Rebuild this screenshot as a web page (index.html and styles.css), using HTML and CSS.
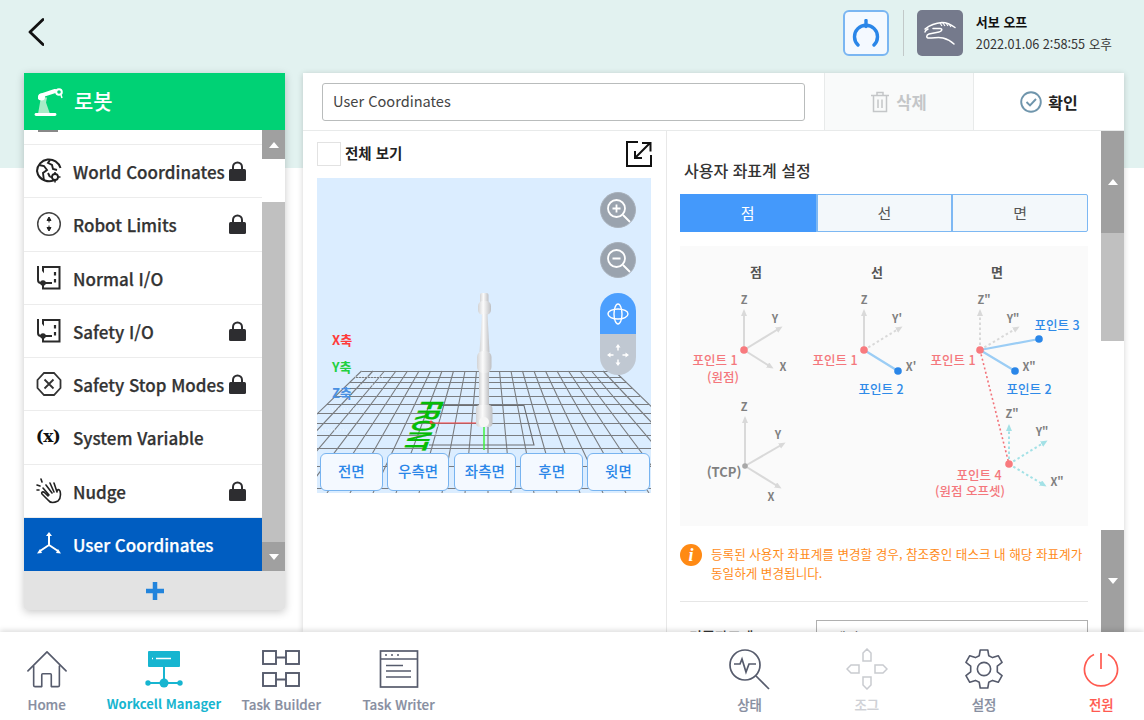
FILE: index.html
```html
<!DOCTYPE html>
<html lang="ko">
<head>
<meta charset="utf-8">
<title>User Coordinates</title>
<link rel="stylesheet" href="styles.css">
</head>
<body>
<div class="app">
  <header class="top">
    <button class="back"><svg width="16" height="28" viewBox="0 0 16 28"><path d="M15 1.500 2 14l13 12.500" fill="none" stroke="#111" stroke-width="2.800" stroke-linecap="round" stroke-linejoin="round"/></svg></button>
    <div class="top-right">
      <div class="home-btn"><svg width="28" height="28" viewBox="0 0 28 28"><path d="M6 26A11.500 11.500 0 1 1 22 26" fill="none" stroke="#2a86e8" stroke-width="3.400" stroke-linecap="round"/><path d="M14 1.500v6" stroke="#2a86e8" stroke-width="3.400" stroke-linecap="round"/></svg></div>
      <div class="vline"></div>
      <div class="servo"><svg width="34" height="26" viewBox="0 0 34 26"><path d="M2 9C7 5 12 3 19 2.500c5 0 9 2 13 5M10 8.500h7c3 0 2 3-1 3.500l-10 2c-3 1-3 4 0 4 6 0 10-1 14 0 4 1 8 3 11 6M2 12c0-1 1-2 3-3" fill="none" stroke="#fff" stroke-width="1.500" stroke-linecap="round"/><path d="M17 3l2 3M20 3l2 3M23 3l2 3M26 4l2 3" stroke="#fff" stroke-width="1.100"/></svg></div>
      <div class="servo-text"><div class="servo-title">서보 오프</div><div class="servo-date">2022.01.06 2:58:55 오후</div></div>
    </div>
  </header>

  <main class="main">
    <aside class="side">
      <div class="side-head">
        <svg width="30" height="30" viewBox="0 0 30 30"><path d="M4 27l3-17 6 .5-1 5 4 11.500z" fill="#a8ecc8"/><path d="M2 27.500h19" stroke="#fff" stroke-width="2.800" stroke-linecap="round"/><path d="M6 11 7 8.500 21 4" stroke="#fff" stroke-width="4" stroke-linecap="round"/><circle cx="7.500" cy="10" r="3.500" fill="#fff"/><circle cx="25" cy="5" r="2.800" fill="none" stroke="#fff" stroke-width="2"/><path d="M27 8l1 3" stroke="#fff" stroke-width="1.500"/></svg>
        <span>로봇</span>
      </div>
      <div class="side-body">
        <ul class="list">
          <li class="item item-cut"><i class="cut-bar"></i></li>
          <li class="item">
            <svg class="ic" viewBox="0 0 26 26"><path d="M21 20A12 12 0 0 1 1 13 12 12 0 0 1 24.500 10" fill="none" stroke="#222" stroke-width="2"/><path d="M3 7l5 1 3 4-4 3 1 8M14 2l-2 3 4 2 1 4 4 1M12 15l2 4" fill="none" stroke="#222" stroke-width="1.900"/><circle cx="19" cy="19" r="3" fill="#fff" stroke="#222" stroke-width="1.800"/><path d="M19 14v2M19 22v2.500M14 19h2M22 19h2.500" stroke="#222" stroke-width="1.600"/></svg>
            <span class="lbl">World Coordinates</span>
            <svg class="lock" viewBox="0 0 17 20"><path d="M4 9V6a4.500 4.500 0 0 1 9 0v3" fill="none" stroke="#2d2d30" stroke-width="2"/><rect y="8" width="17" height="12" rx="1.500" fill="#2d2d30"/></svg>
          </li>
          <li class="item">
            <svg class="ic" viewBox="0 0 26 26"><circle cx="13" cy="13" r="11.300" fill="none" stroke="#444" stroke-width="1.500"/><path d="M13 6l2 3.500h-4zM13 9.500v2M13 20l2-3.500h-4zM13 16.500v-2" fill="#222" stroke="#222" stroke-width="1"/></svg>
            <span class="lbl">Robot Limits</span>
            <svg class="lock" viewBox="0 0 17 20"><path d="M4 9V6a4.500 4.500 0 0 1 9 0v3" fill="none" stroke="#2d2d30" stroke-width="2"/><rect y="8" width="17" height="12" rx="1.500" fill="#2d2d30"/></svg>
          </li>
          <li class="item">
            <svg class="ic" viewBox="0 0 26 26"><rect x="7" y="2" width="16.500" height="21.500" fill="none" stroke="#2a2a2a" stroke-width="2"/><path d="M2 1v14c0 2 1 3 3 3h11" fill="#fff" stroke="#2a2a2a" stroke-width="2"/><circle cx="7" cy="18" r="2.800" fill="#2a2a2a"/><path d="M19 7v3.500M19 14v3.500" stroke="#2a2a2a" stroke-width="2.200"/></svg>
            <span class="lbl">Normal I/O</span>
          </li>
          <li class="item">
            <svg class="ic" viewBox="0 0 26 26"><rect x="7" y="2" width="16.500" height="21.500" fill="none" stroke="#2a2a2a" stroke-width="2"/><path d="M2 1v14c0 2 1 3 3 3h11" fill="#fff" stroke="#2a2a2a" stroke-width="2"/><circle cx="7" cy="18" r="2.800" fill="#2a2a2a"/><path d="M19 7v3.500M19 14v3.500" stroke="#2a2a2a" stroke-width="2.200"/></svg>
            <span class="lbl">Safety I/O</span>
            <svg class="lock" viewBox="0 0 17 20"><path d="M4 9V6a4.500 4.500 0 0 1 9 0v3" fill="none" stroke="#2d2d30" stroke-width="2"/><rect y="8" width="17" height="12" rx="1.500" fill="#2d2d30"/></svg>
          </li>
          <li class="item">
            <svg class="ic" viewBox="0 0 26 26"><path d="M8 2h10l6.500 7v8L18 24H8l-6.500-7V9z" fill="none" stroke="#333" stroke-width="1.800"/><path d="M8.500 8.500l9 9M17.500 8.500l-9 9" stroke="#333" stroke-width="1.800"/></svg>
            <span class="lbl">Safety Stop Modes</span>
            <svg class="lock" viewBox="0 0 17 20"><path d="M4 9V6a4.500 4.500 0 0 1 9 0v3" fill="none" stroke="#2d2d30" stroke-width="2"/><rect y="8" width="17" height="12" rx="1.500" fill="#2d2d30"/></svg>
          </li>
          <li class="item">
            <span class="ic ic-x">(x)</span>
            <span class="lbl">System Variable</span>
          </li>
          <li class="item">
            <svg class="ic" viewBox="0 0 26 26"><path d="M7 10l6 7M10 7l6 8M14 5l4 9M18 5l3 9c0-3 2-3 3-1 1 4 0 8-2 10-4 2-8 2-10-1L6 16c-1-2 1-3 3-1l3 3" fill="none" stroke="#222" stroke-width="1.600" stroke-linecap="round" stroke-linejoin="round"/><path d="M1 7l3 1M5 1l1 3M1 12h2" stroke="#222" stroke-width="1.600" stroke-linecap="round"/></svg>
            <span class="lbl">Nudge</span>
            <svg class="lock" viewBox="0 0 17 20"><path d="M4 9V6a4.500 4.500 0 0 1 9 0v3" fill="none" stroke="#2d2d30" stroke-width="2"/><rect y="8" width="17" height="12" rx="1.500" fill="#2d2d30"/></svg>
          </li>
          <li class="item item-on">
            <svg class="ic" viewBox="0 0 26 26"><path d="M13 14V4M13 14l-9 6M13 14l9 6" stroke="#fff" stroke-width="2"/><path d="M13 1l3 4h-6zM1 22.500l5-.5-2-4zM25 22.500l-5-.5 2-4z" fill="#fff"/></svg>
            <span class="lbl">User Coordinates</span>
          </li>
        </ul>
        <div class="sb sb-left">
          <div class="sb-btn sb-btn-s"><i class="tri-up"></i></div>
          <div class="sb-gap-top"></div>
          <div class="sb-thumb"></div>
          <div class="sb-btn sb-btn-s"><i class="tri-down"></i></div>
        </div>
      </div>
      <div class="side-add"><svg width="20" height="20" viewBox="0 0 20 20"><path d="M10 1v18M1 10h18" stroke="#2284dc" stroke-width="4.500"/></svg></div>
    </aside>

    <section class="panel">
      <div class="panel-head">
        <div class="name-wrap"><div class="name-input">User Coordinates</div></div>
        <div class="act act-del">
          <svg width="18" height="22" viewBox="0 0 18 22"><path d="M0 4.500h18M6 4V1.500h6V4M2.500 5v15.500h13V5M7 8.500v8.500M11 8.500v8.500" fill="none" stroke="#c4c6c8" stroke-width="1.500"/></svg>
          <span>삭제</span>
        </div>
        <div class="act act-ok">
          <svg width="22" height="22" viewBox="0 0 22 22"><circle cx="11" cy="11" r="9.800" fill="none" stroke="#6f95ac" stroke-width="1.900"/><path d="M6.500 11l3.500 3.500 6-6.500" fill="none" stroke="#6f95ac" stroke-width="1.900"/></svg>
          <span>확인</span>
        </div>
      </div>
      <div class="panel-body">
        <div class="viewer">
          <div class="viewer-bar">
            <div class="check"></div>
            <span class="check-label">전체 보기</span>
            <svg class="expand" width="26" height="26" viewBox="0 0 26 26"><path d="M12 1H1v24h24V14" fill="none" stroke="#111" stroke-width="2"/><path d="M9 17 24 2M16 2h8.500v8.500M9 10v7h7" fill="none" stroke="#111" stroke-width="2"/></svg>
          </div>
          <div class="canvas">
            <svg class="scene" width="334" height="315" viewBox="0 0 334 315">
              <g stroke="#7a7d81" stroke-width="1.100" fill="none">
                <path d="M44.500 193-82 315M56 193-59 315M67.500 193-36 315M79 193-13 315M90.500 193 10 315M102 193 33 315M113.500 193 56 315M125 193 79 315M136.500 193 102 315M148 193 125 315M159.500 193 148 315M171 193V315M182.500 193 194 315M194 193 217 315M205.500 193 240 315M217 193 263 315M228.500 193 286 315M240 193 309 315M251.500 193 332 315M263 193 355 315M274.500 193 378 315M286 193 401 315M297.500 193 424 315"/>
                <path d="M44.500 193.500H297.500M38 199.500H304M33 204.500H309M27 210.500H315M19 218.500H323M10 226.500H332M1 235.500H334M0 245.500H334M0 257.500H334M0 270.500H334M0 288.500H334M0 310.500H334"/>
                <path d="M122 227.500H207L217 267H112" stroke="#6c6e72"/>
              </g>
              <g stroke="#f4f8fb" stroke-width="1" stroke-dasharray="1 2" fill="none">
                <path d="M38 199H68M34 207H66M12 231H50M2 252H30M110 240H126M108 248H124M106 256H120"/>
              </g>
              <text class="front" transform="matrix(-.27 .72 -1.600 0 105 223)" x="0" y="0">FRONT</text>
              <path d="M114 245H160" stroke="#ff3c3c" stroke-width="1.200"/>
              <circle cx="114" cy="244" r="1.500" fill="#ff3c3c"/>
              <path d="M167 248V272" stroke="#3ff03f" stroke-width="1.500"/>
              <defs>
                <linearGradient id="metal" x1="0" x2="1" y1="0" y2="0"><stop offset="0" stop-color="#d2d3d5"/><stop offset=".4" stop-color="#fbfbfb"/><stop offset="1" stop-color="#bfc0c3"/></linearGradient>
              </defs>
              <g fill="url(#metal)">
                <rect x="163" y="115" width="8.500" height="12" rx="2"/>
                <rect x="161" y="123" width="13" height="14" rx="5"/>
                <path d="M165 136h5.500l2 38h-10z"/>
                <rect x="162" y="185" width="10" height="46"/>
                <rect x="160" y="173" width="14.500" height="22" rx="6"/>
                <rect x="159" y="227" width="16.500" height="22" rx="4"/>
                <circle cx="167" cy="244" r="5" fill="#f6f6f6"/>
              </g>
            </svg>
            <span class="axis axis-x">X축</span>
            <span class="axis axis-y">Y축</span>
            <span class="axis axis-z">Z축</span>
            <div class="tools">
              <div class="tool"><svg width="26" height="26" viewBox="0 0 26 26"><circle cx="11.500" cy="11.500" r="8.500" fill="none" stroke="#fff" stroke-width="1.800"/><path d="M18 18l7 7M7.500 11.500h8M11.500 7.500v8" stroke="#fff" stroke-width="1.800"/></svg></div>
              <div class="tool"><svg width="26" height="26" viewBox="0 0 26 26"><circle cx="11.500" cy="11.500" r="8.500" fill="none" stroke="#fff" stroke-width="1.800"/><path d="M18 18l7 7M7.500 11.500h8" stroke="#fff" stroke-width="1.800"/></svg></div>
              <div class="pill">
                <div class="pill-a"><svg width="24" height="24" viewBox="0 0 24 24"><ellipse cx="12" cy="12" rx="10" ry="5" fill="none" stroke="#fff" stroke-width="1.400"/><ellipse cx="12" cy="12" rx="4" ry="10" fill="none" stroke="#fff" stroke-width="1.400"/></svg></div>
                <div class="pill-b"><svg width="24" height="24" viewBox="0 0 24 24"><path d="M12 3.500v4M12 16.500v4M3.500 12h4M16.500 12h4" stroke="#fff" stroke-width="1.500"/><path d="M12 1l2.500 3.500h-5zM12 23l2.500-3.500h-5zM1 12l3.500-2.500v5zM23 12l-3.500-2.500v5z" fill="#fff"/></svg></div>
              </div>
            </div>
            <div class="views">
              <div class="view">전면</div>
              <div class="view">우측면</div>
              <div class="view">좌측면</div>
              <div class="view">후면</div>
              <div class="view">윗면</div>
            </div>
          </div>
        </div>
        <div class="settings">
          <div class="scroll">
            <h2 class="title">사용자 좌표계 설정</h2>
            <div class="tabs">
              <div class="tab tab-on">점</div>
              <div class="tab">선</div>
              <div class="tab">면</div>
            </div>
            <div class="figure">
              <svg width="408" height="280" viewBox="0 0 408 280">
                <defs>
                  <marker id="ag" markerWidth="8" markerHeight="8" refX="4" refY="3" orient="auto" markerUnits="userSpaceOnUse"><path d="M0 0 7 3 0 6z" fill="#d9d9d9"/></marker>
                  <marker id="at" markerWidth="8" markerHeight="8" refX="4" refY="3" orient="auto" markerUnits="userSpaceOnUse"><path d="M0 0 7 3 0 6z" fill="#a3e1e6"/></marker>
                </defs>
                <g class="heads"><text x="76" y="31">점</text><text x="197" y="31">선</text><text x="317" y="31">면</text></g>
                <g stroke="#d9d9d9" stroke-width="2" fill="none">
                  <path d="M64 104V66" marker-end="url(#ag)"/><path d="M64 104 100 82" marker-end="url(#ag)"/><path d="M64 104 91 121" marker-end="url(#ag)"/>
                  <path d="M184 104V66" marker-end="url(#ag)"/>
                  <path d="M65 220V173" marker-end="url(#ag)"/><path d="M65 220 103 198" marker-end="url(#ag)"/><path d="M65 220 99 241" marker-end="url(#ag)"/>
                </g>
                <g stroke="#d9d9d9" stroke-width="2" stroke-dasharray="2.500 2.500" fill="none">
                  <path d="M184 104 220 82" marker-end="url(#ag)"/><path d="M300 104V66" marker-end="url(#ag)"/><path d="M300 104 337 82" marker-end="url(#ag)"/>
                </g>
                <g stroke="#a3e1e6" stroke-width="2" stroke-dasharray="2.500 2.500" fill="none">
                  <path d="M329 218V181" marker-end="url(#at)"/><path d="M329 218 365 196" marker-end="url(#at)"/><path d="M329 218 364 239" marker-end="url(#at)"/>
                </g>
                <path d="M184 104 218 125M300 104 359 93M300 104 335 125" stroke="#9bcdf5" stroke-width="2.200" fill="none"/>
                <path d="M300 104 329 218" stroke="#f2737a" stroke-width="1.600" stroke-dasharray="2 2.500" fill="none"/>
                <g fill="#f87a7e"><circle cx="64" cy="104" r="3.800"/><circle cx="184" cy="104" r="3.800"/><circle cx="300" cy="104" r="3.800"/><circle cx="329" cy="218" r="3.800"/></g>
                <g fill="#2a86e8"><circle cx="218" cy="125" r="3.800"/><circle cx="359" cy="93" r="3.800"/><circle cx="335" cy="125" r="3.800"/></g>
                <circle cx="65" cy="220" r="2.800" fill="#a8a8a8"/>
                <g class="ax">
                  <text x="64" y="58">Z</text><text x="95" y="77">Y</text><text x="103" y="125">X</text>
                  <text x="184" y="58">Z</text><text x="217" y="77">Y'</text><text x="231" y="125">X'</text>
                  <text x="304" y="58">Z"</text><text x="333" y="77">Y"</text><text x="349" y="125">X"</text>
                  <text x="332" y="172">Z"</text><text x="362" y="190">Y"</text><text x="377" y="240">X"</text>
                  <text x="64" y="165">Z</text><text x="98" y="193">Y</text><text x="91" y="255">X</text>
                  <text x="44" y="231" class="ax-lg">(TCP)</text>
                </g>
                <g class="red">
                  <text x="35" y="119">포인트 1</text><text x="43" y="136">(원점)</text>
                  <text x="155" y="119">포인트 1</text><text x="273" y="119">포인트 1</text>
                  <text x="299" y="234">포인트 4</text><text x="290" y="250">(원점 오프셋)</text>
                </g>
                <g class="blue">
                  <text x="201" y="148">포인트 2</text><text x="349" y="148">포인트 2</text><text x="377" y="84">포인트 3</text>
                </g>
              </svg>
            </div>
            <div class="notice">
              <div class="notice-i">i</div>
              <p class="notice-t">등록된 사용자 좌표계를 변경할 경우, 참조중인 태스크 내 해당 좌표계가<br>동일하게 변경됩니다.</p>
            </div>
            <div class="rule"></div>
            <div class="field">
              <span class="field-label">기준좌표계</span>
              <div class="field-input">베이스</div>
            </div>
          </div>
          <div class="sb sb-right">
            <div class="sb-btn sb-btn-l"><i class="tri-up"></i></div>
            <div class="sb-thumb-r"></div>
            <div class="sb-gap"></div>
            <div class="sb-btn sb-btn-l sb-btn-end"><i class="tri-down"></i></div>
          </div>
        </div>
      </div>
    </section>
  </main>

  <nav class="nav">
    <div class="nav-group">
      <div class="nav-item">
        <svg width="40" height="40" viewBox="0 0 42 40"><path d="M1 22 21 2l20 20M7 17v20c0 1 .5 1.500 1.500 1.500h7V26c0-.500.500-1 1-1h8c.500 0 1 .5 1 1v12.500h7c1 0 1.500-.5 1.500-1.500V17" fill="none" stroke="#565b6c" stroke-width="1.700" stroke-linejoin="round" stroke-linecap="round"/></svg>
        <span>Home</span>
      </div>
      <div class="nav-item nav-on">
        <svg width="38" height="40" viewBox="0 0 38 40"><rect x="3" y="2" width="32" height="16" rx="1" fill="#17b5d0"/><path d="M11 9.500h15M7 9.500h1" stroke="#fff" stroke-width="1.500"/><path d="M19 18v20M2 34h34" stroke="#17b5d0" stroke-width="2"/><circle cx="19" cy="34" r="4.500" fill="#17b5d0"/><circle cx="3" cy="34" r="2.700" fill="#17b5d0"/><circle cx="35" cy="34" r="2.700" fill="#17b5d0"/></svg>
        <span>Workcell Manager</span>
      </div>
      <div class="nav-item">
        <svg width="38" height="40" viewBox="0 0 38 40"><g fill="none" stroke="#565b6c" stroke-width="1.900"><rect x="1" y="2" width="13" height="13"/><rect x="24" y="2" width="13" height="13"/><rect x="1" y="24" width="13" height="13"/><rect x="24" y="24" width="13" height="13"/><path d="M14 8.500h10M14 30.500h10"/></g></svg>
        <span>Task Builder</span>
      </div>
      <div class="nav-item">
        <svg width="40" height="40" viewBox="0 0 40 40"><g fill="none" stroke="#565b6c" stroke-width="1.700"><rect x="1.500" y="2" width="37" height="36"/><path d="M1.500 10h37M7 16.500h17M7 22h25M7 28h25"/></g><path d="M6 6h2M12 6h2M18 6h2" stroke="#565b6c" stroke-width="1.500"/></svg>
        <span>Task Writer</span>
      </div>
    </div>
    <div class="nav-group">
      <div class="nav-item">
        <svg width="42" height="42" viewBox="0 0 42 42"><circle cx="17" cy="17" r="15" fill="none" stroke="#565b6c" stroke-width="1.700"/><path d="M6 16h6l2-5 4 13 3-8h7" fill="none" stroke="#565b6c" stroke-width="1.700"/><path d="M28 28l13 13" stroke="#565b6c" stroke-width="1.700"/></svg>
        <span>상태</span>
      </div>
      <div class="nav-item nav-off">
        <svg width="42" height="42" viewBox="0 0 42 42"><path d="M17 13V5l4-4 4 4v8zM17 29v8l4 4 4-4v-8zM13 17H5l-4 4 4 4h8zM29 17h8l4 4-4 4h-8z" fill="none" stroke="#c9cbd0" stroke-width="1.500"/></svg>
        <span>조그</span>
      </div>
      <div class="nav-item">
        <svg width="38" height="40" viewBox="0 0 40 42"><path d="M16 1h8l1 6 4 2 6-2 4 7-5 4v6l5 4-4 7-6-2-4 2-1 6h-8l-1-6-4-2-6 2-4-7 5-4v-6L1 14l4-7 6 2 4-2z" fill="none" stroke="#565b6c" stroke-width="1.700" stroke-linejoin="round"/><circle cx="20" cy="21" r="7" fill="none" stroke="#565b6c" stroke-width="1.700"/></svg>
        <span>설정</span>
      </div>
      <div class="nav-item nav-power">
        <svg width="36" height="36" viewBox="0 0 36 36"><path d="M11 3.500a16.500 16.500 0 1 0 14 0" fill="none" stroke="#ff5a50" stroke-width="1.700"/><path d="M18 2v16" stroke="#ff5a50" stroke-width="1.700"/></svg>
        <span>전원</span>
      </div>
    </div>
  </nav>
</div>
</body>
</html>
```
FILE: styles.css
```css
* { box-sizing: border-box; }
html, body { margin: 0; padding: 0; }
body {
  width: 1144px;
  height: 720px;
  overflow: hidden;
  font-family: "Noto Sans CJK KR", "Noto Sans", sans-serif;
  background: linear-gradient(#e2f2f0 168px, #fff 168px);
  color: #333;
}
.app { display: flex; flex-direction: column; height: 720px; overflow: hidden; }

/* top */
.top { height: 73px; display: flex; justify-content: space-between; flex: none; }
.back { background: none; border: 0; padding: 0; margin: 18px 0 0 26px; width: 20px; height: 28px; }
.top-right { display: flex; align-items: flex-start; padding-top: 10px; padding-right: 32px; }
.home-btn {
  width: 46px; height: 46px; border: 2px solid #7ab6f2; border-radius: 6px; background: #f4f9ff;
  display: flex; align-items: center; justify-content: center;
}
.vline { width: 1px; height: 46px; background: #c2c9c9; margin: 0 13px 0 14px; }
.servo {
  width: 46px; height: 46px; background: #757a8c; border-radius: 5px;
  display: flex; align-items: center; justify-content: center;
}
.servo-text { margin-left: 13px; }
.servo-title { font-size: 13px; font-weight: 700; line-height: 24px; color: #111; }
.servo-date { font-size: 12.700px; line-height: 19px; color: #333; }

/* main */
.main { flex: none; height: 559px; display: flex; padding-left: 24px; }
.side {
  width: 261px; height: 537px; flex: none; display: flex; flex-direction: column;
  box-shadow: 0 2px 8px rgba(0,0,0,.22); border-radius: 0 0 3px 3px; background: #fff;
}
.side-head {
  height: 57px; flex: none; background: #00d275; display: flex; align-items: center;
  padding-left: 10px; color: #fff; font-size: 21px; font-weight: 500;
}
.side-head span { margin-left: 10px; padding-bottom: 3px; }
.side-body { height: 441px; flex: none; display: flex; }
.list { list-style: none; margin: 0; padding: 0; flex: 1; min-width: 0; }
.item {
  height: 53.250px; display: flex; align-items: center; padding-left: 12px;
  border-bottom: 1px solid #ececec; background: #fff;
}
.item-cut { height: 15px; align-items: flex-start; }
.cut-bar { display: block; width: 20px; height: 2px; background: #888; margin-left: 2px; }
.item-on { background: #005dc1; border-bottom: 0; color: #fff; }
.ic { width: 26px; height: 26px; flex: none; }
.ic-x { font-size: 17px; font-weight: 700; line-height: 24px; text-align: center; color: #111; font-family: "DejaVu Serif", serif; letter-spacing: -.5px; margin-left: -1px; margin-right: 1px; }
.lbl { margin-left: 11px; flex: 1; font-size: 17px; font-weight: 500; line-height: 26px; padding-top: 2px; white-space: nowrap; -webkit-text-stroke: .25px currentColor; }
.lock { width: 17px; height: 20px; flex: none; margin-right: 16px; }

.sb { flex: none; width: 23px; display: flex; flex-direction: column; }
.sb-btn { background: #a0a0a0; display: flex; align-items: center; justify-content: center; flex: none; }
.sb-btn-s { height: 29px; }
.sb-gap-top { height: 43px; background: #fff; flex: none; }
.sb-thumb { flex: 1; background: #c0c0c0; }
.tri-up, .tri-down { display: block; width: 0; height: 0; border-left: 5px solid transparent; border-right: 5px solid transparent; }
.tri-up { border-bottom: 6px solid #fff; }
.tri-down { border-top: 6px solid #fff; }
.side-add {
  height: 39px; flex: none; background: #e3e3e3; display: flex; align-items: center; justify-content: center;
  border-radius: 0 0 3px 3px;
}

/* panel */
.panel {
  width: 821px; height: 559px; flex: none; margin-left: 18px; background: #fff;
  display: flex; flex-direction: column; box-shadow: 0 1px 6px rgba(0,0,0,.18);
}
.panel-head { height: 58px; flex: none; display: flex; border-bottom: 1px solid #e8eaea; }
.name-wrap { width: 521px; padding: 10px 19px 0 19px; flex: none; }
.name-input {
  height: 38px; border: 1px solid #b9bcbc; border-radius: 3px; padding-left: 10px;
  font-size: 14.600px; line-height: 33px; color: #444;
}
.act { display: flex; align-items: center; justify-content: center; gap: 6px; font-size: 16px; font-weight: 700; }
.act-del { width: 150px; background: #f9fafa; border-left: 1px solid #e8eaea; border-right: 1px solid #e8eaea; color: #c4c6c8; gap: 7px; font-size: 16.500px; }
.act-ok { width: 150px; color: #222; }
.panel-body { flex: 1; min-height: 0; display: flex; }

.viewer { width: 364px; flex: none; border-right: 1px solid #e8e8e8; padding: 10px 0 0 14px; }
.viewer-bar { display: flex; align-items: center; width: 335px; height: 26px; }
.check { width: 24px; height: 24px; border: 1px solid #e2e2e2; background: #fff; flex: none; }
.check-label { margin-left: 4px; font-size: 14.500px; font-weight: 700; line-height: 20px; color: #222; flex: 1; padding-bottom: 3px; }
.canvas { position: relative; width: 334px; height: 315px; margin-top: 11px; background: #dbedff; overflow: hidden; }
.scene { display: block; }
.front { font-family: "Liberation Sans", sans-serif; font-size: 20px; font-weight: 700; fill: #05bc05; stroke: #05bc05; stroke-width: .3px; }
.axis { position: absolute; left: 15px; font-size: 13px; font-weight: 700; line-height: 16px; }
.axis-x { top: 154px; color: #ff3b3b; }
.axis-y { top: 181px; color: #22d040; }
.axis-z { top: 207px; color: #4a90e2; }
.tools { position: absolute; left: 283px; top: 14px; display: flex; flex-direction: column; gap: 14px; }
.tool {
  width: 36px; height: 36px; border-radius: 50%; background: #9aa3ae; border: 1px solid #a9b1bb;
  display: flex; align-items: center; justify-content: center;
}
.pill { width: 36px; height: 82px; border-radius: 18px; overflow: hidden; margin-top: 1px; }
.pill-a { height: 41px; background: #4c9ffe; display: flex; align-items: center; justify-content: center; }
.pill-b { height: 41px; background: #c0c8d2; display: flex; align-items: center; justify-content: center; }
.views { position: absolute; left: 3px; top: 275px; display: flex; gap: 4.200px; }
.view {
  width: 62.600px; height: 38px; background: #f4f9ff; border: 1.500px solid #78b4f0; border-radius: 6px;
  color: #2a86e8; font-size: 14.500px; font-weight: 500; line-height: 33px; text-align: center;
}

.settings { flex: 1; min-width: 0; display: flex; }
.scroll { flex: 1; min-width: 0; overflow: hidden; padding: 0 13px 0 13px; }
.title { margin: 28px 0 0 4px; font-size: 16px; font-weight: 500; line-height: 23px; color: #333; }
.tabs { display: flex; margin-top: 12px; height: 38px; width: 408px; border: 1px solid #7db8f3; border-radius: 2px; background: #f3f8fb; }
.tab { flex: 1 1 0; text-align: center; font-size: 15px; line-height: 36px; color: #555; border-left: 2px solid #7db8f3; }
.tab:first-child { border-left: 0; }
.tab-on { flex: none; width: 135.500px; background: #4499fb; color: #fff; margin: -1px 0 -1px -1px; line-height: 38px; }
.figure { margin-top: 14px; width: 408px; height: 280px; background: #fafafa; }
.figure svg { display: block; }
.heads text { font-size: 13px; font-weight: 700; fill: #555; text-anchor: middle; }
.ax text { font-size: 11px; font-weight: 700; fill: #808080; text-anchor: middle; }
.ax .ax-lg { font-size: 13px; }
.red text { font-size: 12.500px; font-weight: 500; fill: #f4777c; text-anchor: middle; }
.blue text { font-size: 12.500px; font-weight: 500; fill: #2f8ae8; text-anchor: middle; }
.notice { display: flex; margin-top: 18px; }
.notice-i {
  width: 22px; height: 22px; border-radius: 50%; background: #ff8a14; flex: none; color: #fff;
  font-family: "Liberation Serif", serif; font-style: italic; font-weight: 700; font-size: 18px; line-height: 22px; text-align: center;
}
.notice-t { margin: 0 0 0 9px; font-size: 12.600px; line-height: 19px; color: #ff8c1a; white-space: nowrap; }
.rule { height: 1px; background: #e6e6e6; margin-top: 19px; }
.field { display: flex; align-items: flex-start; margin-top: 18px; }
.field-label { width: 136px; font-size: 14px; font-weight: 500; line-height: 33px; padding-left: 9px; color: #333; }
.field-input { width: 272px; height: 40px; border: 1px solid #b0b0b0; padding-left: 16px; font-size: 14px; line-height: 33px; color: #444; }
.sb-right { height: 501px; }
.sb-btn-l { height: 102px; }
.sb-thumb-r { height: 108px; background: #c0c0c0; flex: none; }
.sb-gap { flex: 1; background: #fff; }

/* nav */
.nav {
  position: relative; height: 88px; flex: none; display: flex; justify-content: space-between;
  background: #fff; box-shadow: 0 -2px 5px rgba(0,0,0,.13);
}
.nav-group { display: flex; }
.nav-group:first-child { margin-left: -12px; }
.nav-group:last-child { margin-right: -16px; }
.nav-item { width: 117.300px; display: flex; flex-direction: column; align-items: center; position: relative; padding-top: 16px; }
.nav-item svg { height: 42px; flex: none; }
.nav-item span { margin-top: 4px; font-size: 13.400px; font-weight: 500; line-height: 20px; color: #878ea0; white-space: nowrap; -webkit-text-stroke: .2px currentColor; }
.nav-on span { color: #17b5d0; font-weight: 700; font-size: 13px; -webkit-text-stroke: 0; }
.nav-off span { color: #cfd1d6; }
.nav-power span { color: #ff5a50; }
```
